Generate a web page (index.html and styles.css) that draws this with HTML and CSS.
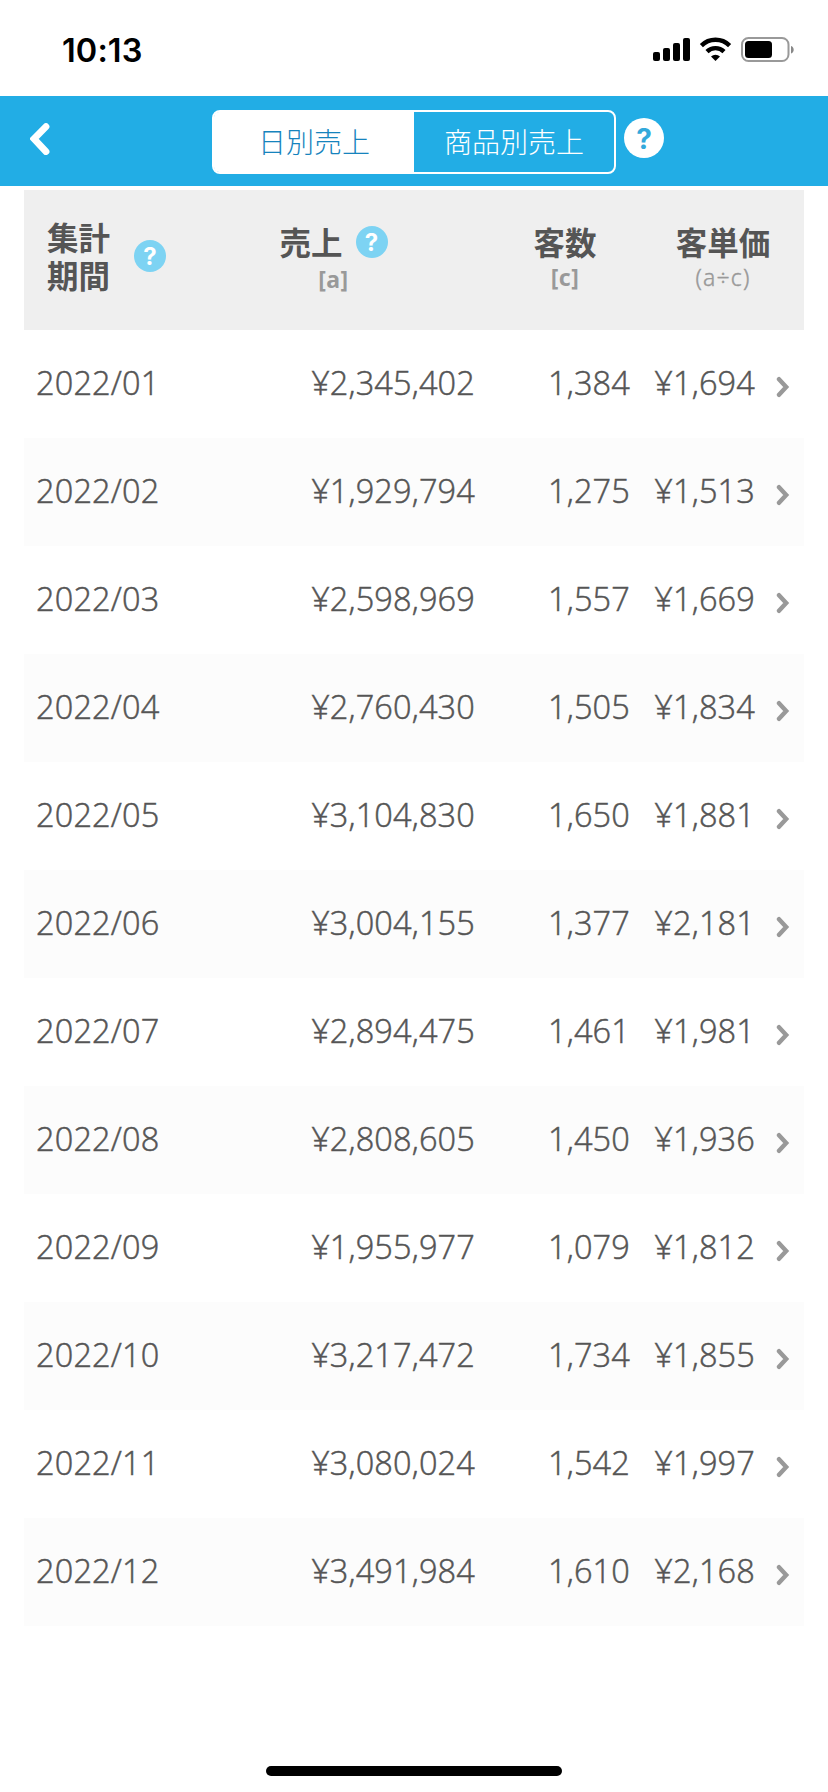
FILE: index.html
```html
<!DOCTYPE html>
<html lang="ja">
<head>
    <meta charset="UTF-8">
    <meta name="viewport" content="width=device-width, initial-scale=1.0">
    <title>日別売上</title>
    <link rel="stylesheet" href="styles.css">
</head>
<body>
    <svg width="0" height="0" class="defs">
        <symbol id="arrow" viewBox="0 0 14 22">
            <path d="M3 3.2 L10.2 11 L3 18.8" fill="none" stroke="#999" stroke-width="4.4" stroke-linecap="round" stroke-linejoin="miter"/>
        </symbol>
    </svg>

    <div class="statusbar">
        <span class="time">10:13</span>
        <svg class="signal" width="142" height="26" viewBox="0 0 142 26">
            <rect x="0" y="15" width="7" height="9" rx="2"/>
            <rect x="10" y="11" width="7" height="13" rx="2"/>
            <rect x="20" y="6" width="7" height="18" rx="2"/>
            <rect x="30" y="1" width="7" height="23" rx="2"/>
            <g fill="none" stroke="#000" stroke-width="4.4">
                <path d="M48.4 8.6 A20 20 0 0 1 76.6 8.6"/>
                <path d="M54 14.6 A12.2 12.2 0 0 1 71 14.6"/>
            </g>
            <path d="M58 19.4 A6.6 6.6 0 0 1 67 19.4 L62.5 24 Z"/>
            <rect x="89" y="1" width="46.5" height="23" rx="6.5" fill="none" stroke="#999" stroke-width="2"/>
            <rect x="92" y="4" width="27" height="17" rx="3.5"/>
            <path d="M138 9 C141.6 10 141.6 15.500 138 16.500 Z" fill="#888"/>
        </svg>
    </div>

    <div class="navbar">
        <svg class="back" width="20" height="32" viewBox="0 0 20 32">
            <path d="M16 3.6 L4 15.800 L16 28.600" fill="none" stroke="#fff" stroke-width="6.8" stroke-linecap="round"/>
        </svg>
        <div class="tabs">
            <div class="tab active">日別売上</div>
            <div class="tab">商品別売上</div>
        </div>
        <span class="help help-nav">?</span>
    </div>

    <div class="report">
        <div class="head">
            <div class="period">
                <span>集計<br>期間</span>
                <span class="help">?</span>
            </div>
            <div class="sales">
                <div class="label">売上<span class="help">?</span></div>
                <div class="sub">[a]</div>
            </div>
            <div class="count">
                <div class="label">客数</div>
                <div class="sub">[c]</div>
            </div>
            <div class="unit">
                <div class="label">客単価</div>
                <div class="sub light">(a÷c)</div>
            </div>
        </div>
        <div class="row"><span>2022/01</span><span>¥2,345,402</span><span>1,384</span><span>¥1,694</span><svg class="arrow"><use href="#arrow"/></svg></div>
        <div class="row"><span>2022/02</span><span>¥1,929,794</span><span>1,275</span><span>¥1,513</span><svg class="arrow"><use href="#arrow"/></svg></div>
        <div class="row"><span>2022/03</span><span>¥2,598,969</span><span>1,557</span><span>¥1,669</span><svg class="arrow"><use href="#arrow"/></svg></div>
        <div class="row"><span>2022/04</span><span>¥2,760,430</span><span>1,505</span><span>¥1,834</span><svg class="arrow"><use href="#arrow"/></svg></div>
        <div class="row"><span>2022/05</span><span>¥3,104,830</span><span>1,650</span><span>¥1,881</span><svg class="arrow"><use href="#arrow"/></svg></div>
        <div class="row"><span>2022/06</span><span>¥3,004,155</span><span>1,377</span><span>¥2,181</span><svg class="arrow"><use href="#arrow"/></svg></div>
        <div class="row"><span>2022/07</span><span>¥2,894,475</span><span>1,461</span><span>¥1,981</span><svg class="arrow"><use href="#arrow"/></svg></div>
        <div class="row"><span>2022/08</span><span>¥2,808,605</span><span>1,450</span><span>¥1,936</span><svg class="arrow"><use href="#arrow"/></svg></div>
        <div class="row"><span>2022/09</span><span>¥1,955,977</span><span>1,079</span><span>¥1,812</span><svg class="arrow"><use href="#arrow"/></svg></div>
        <div class="row"><span>2022/10</span><span>¥3,217,472</span><span>1,734</span><span>¥1,855</span><svg class="arrow"><use href="#arrow"/></svg></div>
        <div class="row"><span>2022/11</span><span>¥3,080,024</span><span>1,542</span><span>¥1,997</span><svg class="arrow"><use href="#arrow"/></svg></div>
        <div class="row"><span>2022/12</span><span>¥3,491,984</span><span>1,610</span><span>¥2,168</span><svg class="arrow"><use href="#arrow"/></svg></div>
    </div>

    <div class="home-bar"></div>
</body>
</html>
```

FILE: styles.css
```css
* {
    box-sizing: border-box;
}
body {
    margin: 0;
    height: 1792px;
    display: flex;
    flex-direction: column;
    background-color: #fff;
    color: #555;
    font-family: "Open Sans", "Noto Sans CJK JP", sans-serif;
    overflow: hidden;
}
.defs {
    display: block;
    height: 0;
}
.statusbar {
    height: 96px;
    padding: 2px 33px 0 62px;
    display: flex;
    align-items: center;
    justify-content: space-between;
    color: #000;
}
.time {
    margin-top: 3px;
    font-family: Inter, sans-serif;
    font-size: 32.5px;
    font-weight: 600;
    line-height: 40px;
    letter-spacing: 0.1px;
}
.signal {
    margin-top: 1px;
}
.navbar {
    height: 90px;
    padding-left: 30px;
    display: flex;
    background-color: #22ade5;
}
.back {
    margin-top: 27px;
}
.tabs {
    width: 404px;
    height: 64px;
    margin: 14px 8px 0 162px;
    display: flex;
    border: 2px solid #fff;
    border-radius: 8px;
}
.tab {
    flex: 1;
    text-align: center;
    color: #fff;
    font-family: "Noto Sans CJK JP", sans-serif;
    font-size: 28px;
    font-weight: 300;
    line-height: 58px;
}
.tab.active {
    background-color: #fff;
    color: #1683bd;
    border-radius: 5px 0 0 5px;
}
.help {
    width: 32px;
    height: 32px;
    border-radius: 50%;
    background-color: #7dd3f3;
    color: #fff;
    font-family: Inter, sans-serif;
    font-size: 24px;
    font-weight: 700;
    line-height: 33px;
    text-align: center;
}
.help-nav {
    width: 40px;
    height: 40px;
    margin-top: 22px;
    background-color: #fff;
    color: #33a9db;
    font-size: 28px;
    line-height: 43px;
}
.report {
    margin: 4px 24px 0;
}
.head, .row {
    display: grid;
    grid-template-columns: 170px 281px 155px 125px 49px;
}
.head {
    height: 140px;
    background-color: #efefef;
    font-family: "Noto Sans CJK JP", sans-serif;
    font-size: 31.5px;
    font-weight: 700;
    text-align: center;
}
.period {
    display: flex;
    align-items: flex-start;
    gap: 23px;
    padding: 27px 0 0 23px;
    line-height: 38px;
}
.period .help {
    margin: 23px 0 0 1px;
}
.label {
    display: flex;
    justify-content: center;
    gap: 13px;
    line-height: 38px;
}
.label .help {
    margin-top: 4px;
}
.sales, .count, .unit {
    padding-top: 32px;
}
.sales {
    padding-right: 2px;
}
.sales .sub {
    padding-top: 2px;
}
.count {
    padding-left: 25px;
}
.unit {
    grid-column: span 2;
    padding-left: 12px;
}
.sub {
    color: #999;
    font-family: "Noto Sans", sans-serif;
    font-size: 23px;
    line-height: 34px;
    letter-spacing: 0.5px;
}
.sub.light {
    font-weight: 300;
    letter-spacing: 1.2px;
    -webkit-text-stroke: 0.4px #999;
}
.row {
    height: 108px;
    align-items: center;
    font-size: 32.5px;
    font-weight: 300;
    line-height: 44px;
    letter-spacing: 0.15px;
    text-align: right;
    -webkit-text-stroke: 0.5px #555;
}
.row:nth-child(odd) {
    background-color: #fcfcfc;
}
.row span {
    padding-bottom: 2px;
}
.row span:first-child {
    padding-left: 12px;
    text-align: left;
}
.arrow {
    width: 14px;
    height: 22px;
    margin: 5px 0 0 21px;
}
.home-bar {
    width: 296px;
    height: 10px;
    margin: auto auto 16px;
    border-radius: 5px;
    background-color: #000;
}
```
